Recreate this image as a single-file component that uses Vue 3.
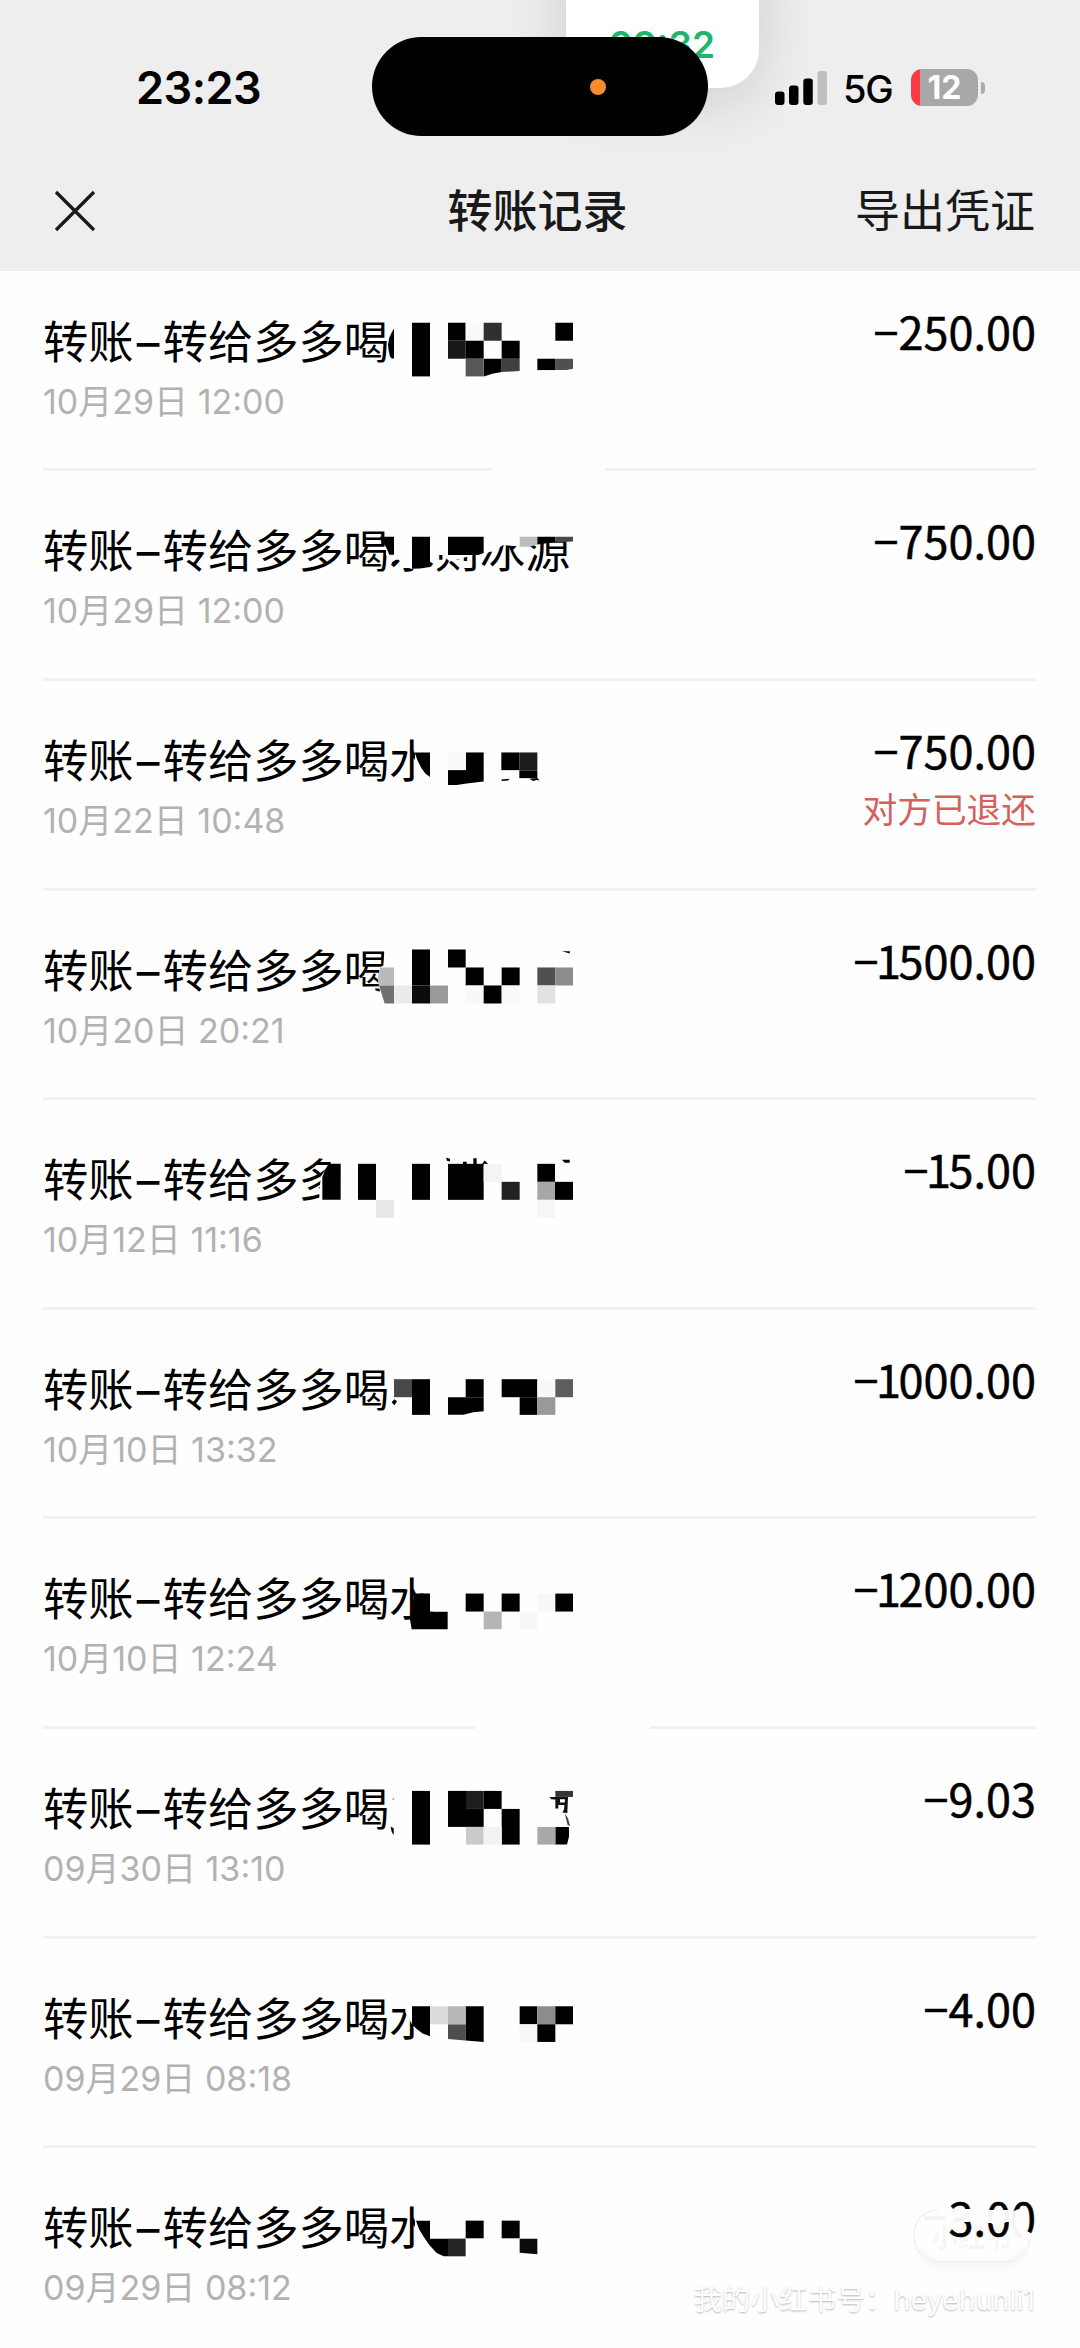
<script setup>
// Mosaic cells are [x, y, w, h, colour]; shapes are [points, colour].
// Both use a grid of a third of a pixel, starting at ox from the left edge.
const P = '#fefefe'
const K = '#000'
const rows = [
  {
    title: '转给多多喝', date: '10月29日 12:00', amount: '−250.00', ox: 340, gap: [492, 113],
    cells: [[216, 67, 54, 161, K], [324, 67, 53, 54, K], [377, 67, 54, 54, '#f9f9f9'], [431, 67, 54, 54, '#303030'], [324, 121, 53, 54, '#181818'], [377, 121, 54, 54, K], [485, 121, 54, 54, K], [377, 175, 54, 53, '#585858'], [646, 67, 53, 54, K], [592, 175, 54, 34, K]],
    shapes: [['162,84 155,96 148,112 144,132 146,150 150,168 155,174 162,174', K], ['431,175 485,175 485,215 460,219 431,228', K], ['485,175 539,175 539,212 485,215', '#404040'], ['646,175 699,175 699,205 680,209 646,209', '#505050']]
  },
  {
    title: '转给多多喝水则冰源', date: '10月29日 12:00', amount: '−750.00', ox: 340,
    cells: [],
    shapes: [['138,40 720,40 720,82 539,110 490,106 460,124 431,132 400,136 350,150 325,152 310,136 270,136 245,174 216,178 196,172 176,150 150,150 138,135', P], ['120,81 162,81 162,135 148,135 138,112 120,88', K], ['216,81 270,81 270,172 240,176 216,177', K], ['324,81 431,81 431,130 415,136 324,136', K], ['539,81 592,81 592,104 570,111 539,111', '#bdbdbd'], ['592,81 646,81 646,97 592,104', K], ['646,81 699,81 699,95 646,98', '#484848'], ['155,158 168,150 174,158 162,170', K]]
  },
  {
    title: '转给多多喝水', date: '10月22日 10:48', amount: '−750.00', refunded: true, ox: 300,
    cells: [[444, 97, 54, 53, '#f9f9f9'], [498, 97, 53, 54, K], [604, 97, 54, 53, K], [658, 97, 54, 54, '#1c1c1c'], [658, 151, 54, 23, K]],
    shapes: [['345,45 410,45 410,210 345,210', P], ['344,97 390,97 390,171 376,160 364,144 352,120', K], ['444,150 551,150 551,184 500,190 470,195 444,195', K], ['604,178 629,176 624,181 606,183', K], ['688,176 712,174 719,181 710,180 700,183', K]]
  },
  {
    title: '转给多多喝', date: '10月20日 20:21', amount: '−1500.00', ox: 340,
    cells: [[216, 57, 54, 108, K], [162, 165, 54, 54, '#eaeaea'], [216, 165, 54, 54, '#0c0c0c'], [270, 165, 54, 54, '#999'], [324, 57, 53, 54, K], [377, 111, 54, 54, K], [485, 111, 54, 54, K], [377, 165, 54, 54, '#f8f8f8'], [431, 165, 54, 54, K], [485, 165, 54, 54, '#f9f9f9'], [592, 111, 54, 54, '#505050'], [646, 111, 53, 54, '#8c8c8c'], [592, 165, 54, 54, '#e2e2e2']],
    shapes: [['134,50 160,50 160,230 134,218 120,183 70,183 70,170 117,168 114,140 120,111 130,105', P], ['120,111 162,111 162,165 117,165 114,140', '#bababa'], ['117,165 162,165 162,219 134,219', '#707070'], ['105,174 118,174 120,182 107,180', K], ['666,62 690,62 689,69 682,67', K]]
  },
  {
    title: '转给多多', date: '10月12日 11:16', amount: '−15.00', ox: 290,
    cells: [[204, 72, 54, 108, K], [258, 180, 54, 54, '#e8e8e8'], [366, 72, 54, 108, K], [474, 72, 107, 108, K], [581, 72, 54, 54, '#f4f4f4'], [635, 126, 54, 54, '#222'], [742, 72, 53, 54, K], [742, 126, 53, 54, '#a7a7a7'], [795, 126, 54, 54, K], [742, 180, 53, 54, '#f6f6f6']],
    shapes: [['122,40 165,40 165,200 88,200 88,150 93,110 108,85 122,76', P], ['116,72 152,72 152,180 97,180 97,112 104,92', K], ['468,54 480,57 480,65 471,63', K], ['512,73 519,73 519,66 530,66 530,75 550,75 550,55 560,55 560,76 574,76 584,62 596,74 581,78 512,78', K], ['816,60 839,60 839,69 824,69', K]]
  },
  {
    title: '转给多多喝', date: '10月10日 13:32', amount: '−1000.00', ox: 340,
    cells: [[162, 87, 54, 54, '#484848'], [216, 87, 54, 107, K], [377, 87, 54, 54, K], [485, 87, 107, 54, K], [539, 141, 53, 53, K], [592, 87, 54, 54, '#f8f8f8'], [646, 87, 53, 54, '#5d5d5d'], [592, 141, 54, 53, '#999']],
    shapes: [['324,141 377,141 431,141 431,183 400,186 370,194 324,194', K], ['155,156 163,147 171,153 163,165', K]]
  },
  {
    title: '转给多多喝水', date: '10月10日 12:24', amount: '−1200.00', ox: 340, gap: [475, 175],
    cells: [[377, 102, 54, 54, K], [485, 102, 54, 54, K], [431, 156, 54, 53, '#b5b5b5'], [539, 156, 53, 53, '#f8f8f8'], [592, 102, 54, 54, '#f8f8f8'], [646, 102, 53, 54, K], [270, 50, 54, 106, P]],
    shapes: [['225,48 290,48 290,102 230,102', P], ['222,102 270,102 270,156 323,156 323,209 215,209 210,180 216,156', K]]
  },
  {
    title: '转给多多喝', date: '09月30日 13:10', amount: '−9.03', ox: 340,
    cells: [[216, 63, 54, 161, K], [324, 63, 54, 108, K], [378, 63, 53, 54, '#1e1e1e'], [431, 63, 54, 54, K], [378, 117, 53, 54, K], [485, 117, 54, 107, K], [378, 171, 53, 53, '#cacaca'], [431, 171, 54, 53, '#f2f2f2'], [592, 171, 54, 53, '#a9a9a9'], [646, 63, 53, 18, '#363636']],
    shapes: [['152,170 161,175 161,195 155,186', K], ['156,90 162,84 161,88', K], ['646,171 687,171 687,200 681,224 646,224', K], ['628,81 684,81 682,129 667,128 672,119 675,88 660,88 660,98 674,98 674,105 655,105 655,116 646,116 646,89 634,88', '#111'], ['674,130 684,145 690,168 683,165', '#444']]
  },
  {
    title: '转给多多喝水', date: '09月29日 08:18', amount: '−4.00', ox: 340,
    cells: [[270, 78, 54, 54, '#dcdcdc'], [324, 78, 53, 54, '#b7b7b7'], [539, 78, 53, 54, K], [592, 78, 54, 54, '#8c8c8c'], [646, 78, 53, 54, K], [539, 132, 53, 53, '#f7f7f7'], [592, 132, 54, 53, K]],
    shapes: [['196,45 290,45 290,180 224,178 224,150 216,132 196,96', P], ['216,78 270,78 270,168 248,160 232,148 222,139 216,142', K], ['324,132 377,132 377,181 324,176', '#4d4d4d'], ['377,78 431,78 431,185 377,181', K]]
  },
  {
    title: '转给多多喝水', date: '09月29日 08:12', amount: '−3.00', ox: 340, stamped: true,
    cells: [[377, 93, 54, 53, K], [485, 93, 54, 53, K], [324, 147, 53, 53, '#242424']],
    shapes: [['225,45 300,45 300,210 270,210 225,174', P], ['228,93 270,93 270,147 324,147 324,200 311,200 290,190 268,166 250,140 237,118', K], ['539,147 592,147 592,194 539,189', '#0b0b0b']]
  }
]
</script>

<template>
  <div class="screen">
    <header class="header">
      <div class="float-card"><span>09:32</span></div>
      <div class="status">
        <span class="time">23:23</span>
        <div class="island"><i></i></div>
        <div class="right">
          <svg class="signal" width="52" height="34" viewBox="0 0 52 34">
            <rect x="0" y="20.500" width="9.500" height="13.500" rx="3" />
            <rect x="14" y="14.500" width="9.500" height="19.500" rx="3" />
            <rect x="28.300" y="7.500" width="9.500" height="26.500" rx="3" />
            <rect x="42.500" y="0" width="9.500" height="34" rx="3" fill="#bfbfbf" />
          </svg>
          <span class="net">5G</span>
          <div class="battery"><span>12</span></div>
          <i class="nub"></i>
        </div>
      </div>
      <nav class="nav">
        <svg class="close" width="42" height="42" viewBox="0 0 42 42">
          <path d="M2 2 40 40M40 2 2 40" fill="none" stroke="#191919" stroke-width="3.300" />
        </svg>
        <h1>转账记录</h1>
        <span class="export">导出凭证</span>
      </nav>
    </header>

    <main class="list">
      <section v-for="(r, i) in rows" :key="i" class="row">
        <div class="info">
          <p class="title">转账<span class="dash">–</span>{{ r.title }}</p>
          <p class="date">{{ r.date }}</p>
        </div>
        <div class="side">
          <p class="amount"><span v-for="(c, n) in r.amount" :key="n" :class="{ one: c === '1' }">{{ c }}</span></p>
          <p v-if="r.refunded" class="refund">对方已退还</p>
        </div>
        <svg class="mosaic" width="700" height="210" viewBox="0 0 700 210">
          <g :transform="`translate(${r.ox} ${39.4 + i * 0.36}) scale(0.33333)`">
            <polygon v-for="(s, n) in r.shapes" :key="'s' + n" :points="s[0]" :fill="s[1]" />
            <rect v-for="(c, n) in r.cells" :key="'c' + n" :x="c[0]" :y="c[1]" :width="c[2]" :height="c[3]" :fill="c[4]" />
          </g>
          <rect v-if="r.gap" :x="r.gap[0]" y="205" :width="r.gap[1]" height="7" fill="#fefefe" />
        </svg>
        <svg v-if="r.stamped" class="stamp" width="160" height="90" viewBox="0 0 160 90">
          <defs>
            <filter id="soft" x="-20%" y="-50%" width="140%" height="220%">
              <feGaussianBlur stdDeviation="3" />
            </filter>
          </defs>
          <path d="M16 28H72L69 41H63L56 43 48 47H16ZM82 29H109V40L104 42 97 47 91 42H82ZM109 33 118 28 126 34 127 50 134 54V62H109Z" fill="#fefefe" />
          <path d="M24 37H45" stroke="#f4f4f4" stroke-width="4" />
          <path d="M53 40Q67 38 69 30M90 30V41M107 30V41M114 32Q111 52 122 56" fill="none" stroke="#f4f4f4" stroke-width="4" />
          <path d="M20 68Q27 83 39.500 84H104.500Q117 83 126 68" fill="none" stroke="#e6e6e6" stroke-width="4" filter="url(#soft)" opacity=".6" />
          <path d="M38 29Q14 31 14 55.500A25.500 25.500 0 0 0 39.500 81H104.500A25.500 25.500 0 0 0 130 58" fill="none" stroke="#f1f1f1" stroke-width="1.500" />
          <text x="31" y="67" class="brand">小红书</text>
        </svg>
      </section>
    </main>
    <div class="watermark"><span>我的小红书号：</span><span class="uid">heyehunli1</span></div>
  </div>
</template>

<style>
body { margin: 0; background: #fefefe; }
</style>

<style scoped>
.screen {
  position: relative;
  width: 1080px;
  height: 2348px;
  overflow: hidden;
  background: #fefefe;
  color: #000;
  font-family: Inter, "Noto Sans CJK SC", sans-serif;
}
p, h1 { margin: 0; }
.header {
  position: relative;
  z-index: 1;
  height: 270.7px;
  background: #eee;
  overflow: hidden;
}
.float-card {
  position: absolute;
  left: 566px;
  top: -60px;
  width: 193px;
  height: 148px;
  border-radius: 0 0 38px 38px;
  background: #fff;
  box-shadow: 0 12px 60px rgba(0, 0, 0, .14);
}
.float-card span {
  position: absolute;
  right: 44px;
  top: 82px;
  font-size: 37px;
  font-weight: 600;
  color: #20b56c;
}
.status {
  position: relative;
  display: grid;
  grid-template-columns: 372px 336px 372px;
  padding-top: 37px;
  height: 99px;
}
.time {
  padding-left: 136px;
  line-height: 101px;
  font-size: 45px;
  font-weight: 600;
  letter-spacing: -.5px;
}
.island {
  display: flex;
  align-items: center;
  height: 99px;
  border-radius: 50px;
  background: #000;
}
.island i {
  width: 16px;
  height: 16px;
  margin-left: 217.500px;
  border-radius: 50%;
  background: #fb8c2d;
}
.right {
  display: flex;
  align-items: center;
  height: 101px;
  padding-left: 67px;
}
.net {
  width: 68px;
  padding-left: 16px;
  margin-top: 2px;
  font-size: 38px;
  font-weight: 500;
  letter-spacing: -1.2px;
}
.battery {
  width: 67px;
  height: 37px;
  border-radius: 11px;
  background: linear-gradient(90deg, #fb3b43 9px, #a8a8a8 9px);
  text-align: center;
  line-height: 37px;
  font-size: 32px;
  font-weight: 700;
  color: #fff;
}
.nub {
  width: 4px;
  height: 12px;
  margin-left: 3px;
  border-radius: 0 5px 5px 0;
  background: #aaa;
}
.nav {
  display: grid;
  grid-template-columns: 1fr auto 1fr;
  align-items: center;
  height: 150px;
  padding: 0 45px 0 40px;
  color: #191919;
}
.close { margin-left: 14px; }
.nav h1 {
  font-size: 45px;
  font-weight: 500;
  line-height: 60px;
}
.nav h1, .export { margin-top: 2px; }
.export {
  justify-self: end;
  font-size: 45px;
  line-height: 60px;
}
.list { margin-top: -9px; padding: 0 44px 0 43px; }
.row {
  position: relative;
  display: flex;
  justify-content: space-between;
  box-sizing: border-box;
  height: 209.640px;
  border-bottom: 3px solid #f1f1f1;
}
.row:last-child { border-bottom-color: transparent; }
.title {
  margin-top: 51px;
  font-size: 45.300px;
  line-height: 60px;
  white-space: nowrap;
}
.dash { display: inline-block; width: 29px; text-align: center; }
.date {
  margin-top: 6px;
  font-size: 34px;
  line-height: 46px;
  color: #b2b2b2;
}
.side { text-align: right; }
.amount {
  margin-top: 39px;
  font: 400 45px/60px "Noto Sans CJK SC", sans-serif;
  -webkit-text-stroke: .5px #000;
}
.one { margin-left: -2.500px; margin-right: -2.500px; }
.refund {
  margin-top: 7px;
  font-size: 34.700px;
  line-height: 46px;
  color: #d6605c;
}
.mosaic { position: absolute; left: -43px; top: -1px; overflow: visible; }
.stamp { position: absolute; left: 857px; top: 33px; overflow: visible; }
.brand { font-size: 27px; font-weight: 900; fill: rgba(0, 0, 0, .03); }
.watermark {
  position: absolute;
  right: 45px;
  bottom: 28px;
  display: flex;
  font-size: 28.600px;
  line-height: 40px;
  color: #fefefe;
  text-shadow: 0 1px 2px #b8b8b8;
  white-space: nowrap;
}
</style>
